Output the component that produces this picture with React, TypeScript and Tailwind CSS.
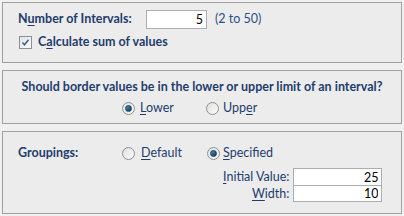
import { ReactNode } from 'react'

function Radio({ on }: { on?: boolean }) {
  return (
    <span className="w-[13px] h-[13px] rounded-full border border-[#8e8f8f] bg-gradient-to-br from-[#e0e0e0] to-[#fbfbfb] flex items-center justify-center shrink-0">
      {on && <span className="w-[7px] h-[7px] rounded-full bg-gradient-to-br from-[#4a8fc0] to-[#0d3a5c] border border-[#1a3f5c]" />}
    </span>
  )
}

function U({ children }: { children: ReactNode }) {
  return <span className="underline underline-offset-2">{children}</span>
}

function Box({ className, children }: { className?: string; children: ReactNode }) {
  return (
    <input
      readOnly
      value={children as string}
      className={`bg-white border border-[#abadb3] text-right text-[#000] px-[3px] text-[12.5px] outline-none ${className}`}
    />
  )
}

export default function App() {
  const font = { fontFamily: 'Lato, "Noto Sans", sans-serif' }
  return (
    <div style={font} className="w-[404px] h-[216px] bg-[#f0f0f0] px-[2px] pt-[2px] flex flex-col gap-[7px] text-[12.5px] text-[#1e3d6d] leading-none">
      {/* intervals */}
      <div className="h-[61px] border border-[#a0a0a0] bg-[#ececec] pl-[15px] pt-[7px] flex flex-col gap-[7px]">
        <div className="flex items-center">
          <span className="font-bold w-[128px]">N<U>u</U>mber of Intervals:</span>
          <Box className="w-[61px] h-[19px]">5</Box>
          <span className="ml-[8px] text-[#2f4f80]">(2 to 50)</span>
        </div>
        <div className="flex items-center gap-[6px] pl-[1px]">
          <span className="w-[13px] h-[13px] border border-[#8e8f8f] bg-gradient-to-br from-[#dde3ea] to-[#fdfdfd] flex items-center justify-center">
            <svg width="9" height="9" viewBox="0 0 9 9">
              <path d="M1.5 4.5 L3.5 6.8 L7.5 1.8" stroke="#3a5a88" strokeWidth="1.4" fill="none" />
            </svg>
          </span>
          <span className="font-bold">C<U>a</U>lculate sum of values</span>
        </div>
      </div>

      {/* border values */}
      <div className="h-[54px] border border-[#a0a0a0] bg-[#ececec] pt-[10px] flex flex-col items-center gap-[8px]">
        <span className="font-bold">Should border values be in the lower or upper limit of an interval?</span>
        <div className="flex items-center self-start pl-[119px]">
          <Radio on />
          <span className="ml-[5px] w-[66px]"><U>L</U>ower</span>
          <Radio />
          <span className="ml-[4px]">Upp<U>e</U>r</span>
        </div>
      </div>

      {/* groupings */}
      <div className="h-[83px] border border-[#a0a0a0] bg-[#ececec] pl-[15px] pt-[15px] flex flex-col">
        <div className="flex items-center">
          <span className="font-bold w-[104px]">Groupings:</span>
          <Radio />
          <span className="ml-[6px] w-[66px]"><U>D</U>efault</span>
          <Radio on />
          <span className="ml-[3px]"><U>S</U>pecified</span>
        </div>
        <div className="mt-[8px] ml-[205px] w-fit grid grid-cols-[auto_89px] gap-x-[4px] items-center">
          <span className="text-right"><U>I</U>nitial Value:</span>
          <Box className="w-[89px] h-[18px]">25</Box>
          <span className="text-right"><U>W</U>idth:</span>
          <Box className="w-[89px] h-[17px] -mt-[1px]">10</Box>
        </div>
      </div>
    </div>
  )
}
